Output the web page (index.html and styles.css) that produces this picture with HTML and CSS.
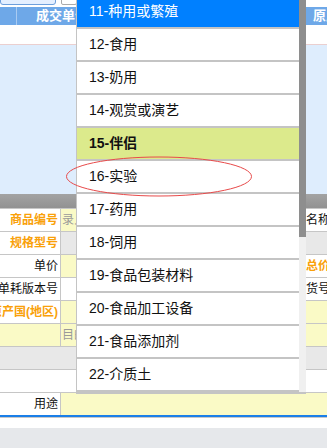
FILE: index.html
```html
<!DOCTYPE html>
<html lang="zh-CN">
<head>
  <meta charset="UTF-8" />
  <title>商品信息 - 用途</title>
  <link rel="stylesheet" href="styles.css">
</head>
<body>
  <div class="page">
    <div class="topbar">
      <span class="tb-btn"></span>
      <span class="tb-box"></span>
    </div>

    <div class="grid-head">
      <div class="gh-num"></div>
      <div class="gh-col">成交单位</div>
      <div class="gh-col gh-right">原产国</div>
    </div>
    <div class="grid-row"></div>
    <div class="grid-body"></div>
    <div class="splitter"></div>

    <div class="form">
      <div class="row">
        <div class="lbl req">商品编号</div>
        <div class="inp yellow"><span class="ph">录入商品编号</span></div>
        <div class="lbl2">名称</div>
      </div>
      <div class="row">
        <div class="lbl req">规格型号</div>
        <div class="inp gray"></div>
        <div class="lbl2 gray"></div>
      </div>
      <div class="row">
        <div class="lbl">单价</div>
        <div class="inp yellow"></div>
        <div class="lbl2 req">总价</div>
      </div>
      <div class="row">
        <div class="lbl">单耗版本号</div>
        <div class="inp"></div>
        <div class="lbl2">货号</div>
      </div>
      <div class="row">
        <div class="lbl req">原产国(地区)</div>
        <div class="inp yellow"></div>
        <div class="lbl2 yellow"></div>
      </div>
      <div class="row yellow">
        <div class="lbl"></div>
        <div class="inp"><span class="ph">目的国(地区)</span></div>
        <div class="lbl2"></div>
      </div>
      <div class="row gray plain"></div>
      <div class="row plain"></div>
      <div class="row focus">
        <div class="lbl">用途</div>
        <div class="inp wide"></div>
      </div>
    </div>

    <div class="gap"></div>
    <div class="footer"></div>

    <!-- 下拉列表 -->
    <div class="dropdown">
      <ul class="options">
        <li class="active">11-种用或繁殖</li>
        <li>12-食用</li>
        <li>13-奶用</li>
        <li>14-观赏或演艺</li>
        <li class="hover">15-伴侣</li>
        <li>16-实验</li>
        <li>17-药用</li>
        <li>18-饲用</li>
        <li>19-食品包装材料</li>
        <li>20-食品加工设备</li>
        <li>21-食品添加剂</li>
        <li>22-介质土</li>
        <li>23-其他</li>
      </ul>
      <div class="scroll"><div class="thumb"></div></div>
    </div>

    <svg class="mark" width="188" height="43" viewBox="0 0 188 43">
      <ellipse cx="94" cy="21.5" rx="92.5" ry="19.5" fill="none" stroke="#e84a4a" stroke-width="1" />
    </svg>
  </div>
</body>
</html>
```

FILE: styles.css
```css
body {
  margin: 0;
  font-family: "Liberation Sans", "Noto Sans CJK SC", sans-serif;
  background-color: #fff;
}

.page {
  position: relative;
  width: 327px;
  height: 448px;
  overflow: hidden;
}

.topbar {
  height: 7px;
  display: flex;
  gap: 5px;
  overflow: hidden;
}

.tb-btn {
  width: 54px;
  height: 12px;
  margin-top: -9px;
  background: #e4efff;
  border: 1px solid #6d9fdc;
  border-radius: 3px;
}

.tb-box {
  width: 14px;
  height: 12px;
  margin-top: -9px;
  border: 1px solid #aaa;
  border-radius: 2px;
}

.grid-head {
  height: 18px;
  display: flex;
  background: #6ea8e8;
  color: #fff;
  font-size: 13px;
  font-weight: bold;
  line-height: 18px;
}

.gh-num {
  width: 16px;
  border-right: 1px solid #a9cbf2;
}

.gh-col {
  width: 269px;
  padding-left: 19px;
  white-space: nowrap;
  overflow: hidden;
}

.gh-right {
  flex: 1;
  width: auto;
  padding-left: 7px;
  border-left: 1px solid #fff;
}

.grid-row {
  height: 19px;
  border-bottom: 1px solid #ebcfcf;
}

.grid-body {
  height: 149px;
  background: #deedfd;
}

.splitter {
  height: 14px;
  background: linear-gradient(#a3a3a3, #929292);
}

.form {
  border-top: 1px solid #c6c6c6;
}

.row {
  display: grid;
  grid-template-columns: 61px 245px 1fr;
  height: 23px;
  box-sizing: border-box;
  border-bottom: 1px solid #c6c6c6;
  font-size: 12px;
  line-height: 22px;
}

.lbl {
  display: flex;
  justify-content: flex-end;
  padding-right: 2px;
  border-right: 1px solid #c6c6c6;
  white-space: nowrap;
  overflow: hidden;
  color: #111;
}

.lbl2 {
  padding-left: 0;
  white-space: nowrap;
  overflow: hidden;
  color: #111;
}

.req {
  color: #f9a10a;
  font-weight: bold;
}

.inp {
  padding-left: 1px;
  border-right: 1px solid #c6c6c6;
  white-space: nowrap;
  overflow: hidden;
}

.ph {
  color: #9a9a9a;
}

.yellow {
  background: #fafac6;
}

.gray {
  background: #e8e8e8;
}

.plain .lbl,
.plain .inp {
  border: none;
}

.focus {
  height: 24px;
  border-bottom: 2px solid #1a7fe8;
}

.inp.wide {
  grid-column: 2 / 4;
  background: #fafac6;
  border-right: none;
}

.gap {
  height: 10px;
  border-top: 1px solid #c8c8c8;
}

.footer {
  height: 30px;
  background: #e6e8eb;
}

.dropdown {
  position: absolute;
  top: 0;
  left: 76px;
  width: 230px;
  height: 394px;
  box-sizing: border-box;
  display: flex;
  background: #fff;
  border-left: 1px solid #c4c4c4;
  border-bottom: 2px solid #c4c4c4;
  overflow: hidden;
  z-index: 2;
}

.options {
  width: 222px;
  margin: -4px 0 0 0;
  padding: 0;
  list-style: none;
}

.options li {
  height: 33px;
  box-sizing: border-box;
  padding-left: 12px;
  border-bottom: 2px solid #c4c4c4;
  font-size: 14px;
  line-height: 31px;
  color: #111;
  white-space: nowrap;
}

.options li.active {
  background: #0080ff;
  color: #fff;
}

.options li.hover {
  background: #dcea8c;
  font-weight: bold;
}

.scroll {
  width: 7px;
  background: #f0f0f0;
}

.thumb {
  height: 237px;
  background: #8e8e8e;
}

.mark {
  position: absolute;
  left: 65px;
  top: 155px;
  z-index: 3;
}
```
